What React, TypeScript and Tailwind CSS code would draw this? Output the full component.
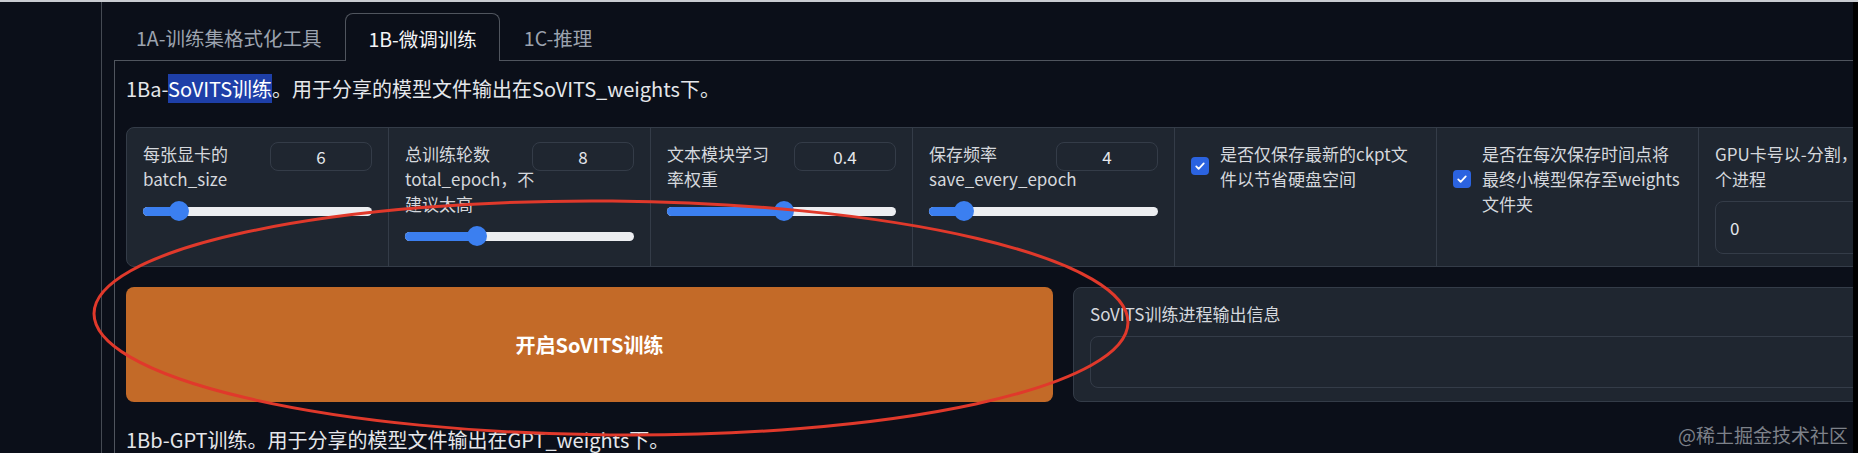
import React from "react";

type NumField = { lines: string[]; value: string; pos: number };
type CheckField = { lines: string[] };

const numFields: NumField[] = [
  { lines: ["每张显卡的", "batch_size"], value: "6", pos: 0.125 },
  { lines: ["总训练轮数", "total_epoch，不", "建议太高"], value: "8", pos: 0.298 },
  { lines: ["文本模块学习", "率权重"], value: "0.4", pos: 0.514 },
  { lines: ["保存频率", "save_every_epoch"], value: "4", pos: 0.12 },
];

const checkFields: CheckField[] = [
  { lines: ["是否仅保存最新的ckpt文", "件以节省硬盘空间"] },
  { lines: ["是否在每次保存时间点将", "最终小模型保存至weights", "文件夹"] },
];

const label = "text-[17px] leading-[25px] text-[#d5d8dd] whitespace-nowrap";

function Slider({ pos }: { pos: number }) {
  // thumb is 20px, so it travels over (track - 20px)
  return (
    <div className="relative mt-[10px] flex h-5 items-center">
      <div className="h-[9px] w-full rounded-full bg-[#eceef1]" />
      <div
        className="absolute left-0 h-[9px] rounded-full bg-[#3b7ff0]"
        style={{ width: `calc(${pos} * (100% - 20px) + 10px)` }}
      />
      <div
        className="absolute top-0 size-5 rounded-full bg-[#3b7ff0]"
        style={{ left: `calc(${pos} * (100% - 20px))` }}
      />
    </div>
  );
}

function NumberCol({ f }: { f: NumField }) {
  return (
    <div className="w-[262px] shrink-0 border-r border-[#343c48] px-4 pt-[13px]">
      <div className="flex gap-1">
        <div className="min-w-0 flex-1">
          {f.lines.map((l) => (
            <div key={l} className={label}>
              {l}
            </div>
          ))}
        </div>
        <div className="mt-px flex h-[29px] w-[102px] shrink-0 items-center justify-center rounded-lg border border-[#343c48] text-[17px] text-[#e5e7eb]">
          {f.value}
        </div>
      </div>
      <Slider pos={f.pos} />
    </div>
  );
}

function CheckCol({ f }: { f: CheckField }) {
  return (
    <div className="flex w-[262px] shrink-0 items-start border-r border-[#343c48] px-4 pt-[13px]">
      <div className="flex items-center gap-[11px]">
        <div className="flex size-[18px] shrink-0 items-center justify-center rounded-[4px] bg-[#2b63e0]">
          <svg viewBox="0 0 16 16" className="size-3" fill="none" stroke="white" strokeWidth="2.4" strokeLinecap="round" strokeLinejoin="round">
            <path d="M3 8.5l3.2 3.2L13 4.5" />
          </svg>
        </div>
        <div>
          {f.lines.map((l) => (
            <div key={l} className={label}>
              {l}
            </div>
          ))}
        </div>
      </div>
    </div>
  );
}

export default function App() {
  return (
    <div className="relative h-[453px] w-[1858px] overflow-hidden bg-[#0b0f19] font-['Noto_Sans_CJK_SC','Noto_Sans',sans-serif]">
      <div className="h-[2px] bg-[#c9ccd1]" />
      <div className="flex h-[451px]">
        <div className="flex h-full w-[1853px] shrink-0 overflow-hidden">
          <div className="w-[101px] shrink-0" />
          <div className="min-w-0 flex-1 border-l border-[#454a53] pl-[12px] pt-[11px]">
            {/* tabs */}
            <div className="relative z-10 -mb-px flex h-[48px] gap-[2px] text-[19.5px]">
              <div className="flex items-center px-[22px] pt-[2px] text-[#9ca3af]">1A-训练集格式化工具</div>
              <div className="flex items-center rounded-t-lg border border-b-0 border-[#50555e] bg-[#0b0f19] px-[22px] pt-[2px] text-[#f3f4f6]">
                1B-微调训练
              </div>
              <div className="flex items-center px-[22px] pt-[2px] text-[#9ca3af]">1C-推理</div>
            </div>

            <div className="w-[2200px] border-l border-t border-[#50555e] pl-[11px] pt-[10px]">
              <p className="text-[20px] leading-[36px] text-[#e5e7eb]">
                1Ba-<span className="bg-[#1e3fa8] text-white">SoVITS训练</span>。用于分享的模型文件输出在SoVITS_weights下。
              </p>

              {/* params row */}
              <div className="mt-5 flex w-[1900px] rounded-lg border border-[#343c48] bg-[#1f2630]">
                {numFields.map((f) => (
                  <NumberCol key={f.value} f={f} />
                ))}
                {checkFields.map((f) => (
                  <CheckCol key={f.lines[0]} f={f} />
                ))}
                <div className="w-[262px] shrink-0 px-4 pt-[13px] pb-[12px]">
                  <div className={label}>GPU卡号以-分割，每个卡号一</div>
                  <div className={label}>个进程</div>
                  <div className="mt-[10px] flex h-[53px] items-center rounded-lg border border-[#343c48] px-[14px] text-[17px] text-[#e5e7eb]">
                    0
                  </div>
                </div>
              </div>

              {/* action row */}
              <div className="mt-5 flex gap-5">
                <button className="flex h-[115px] w-[927px] shrink-0 items-center justify-center rounded-lg bg-[#c36a28] text-[20px] font-bold text-white">
                  开启SoVITS训练
                </button>
                <div className="h-[115px] w-[927px] shrink-0 rounded-lg border border-[#343c48] bg-[#1f2630] px-4 pt-[13px]">
                  <div className={label}>SoVITS训练进程输出信息</div>
                  <div className="mt-[10px] h-[52px] rounded-lg border border-[#343c48]" />
                </div>
              </div>

              <p className="mt-5 text-[20px] leading-[36px] text-[#e5e7eb]">
                1Bb-GPT训练。用于分享的模型文件输出在GPT_weights下。
              </p>
            </div>
          </div>
        </div>
        <div className="w-[5px] shrink-0 bg-black" />
      </div>

      {/* hand-drawn annotation */}
      <svg className="pointer-events-none absolute inset-0" width="1858" height="453">
        <ellipse cx="611" cy="318" rx="517" ry="117" fill="none" stroke="#e0392b" strokeWidth="3" transform="rotate(0.5 611 318)" />
      </svg>

      <div className="absolute bottom-[5px] right-[10px] text-[19px] leading-[26px] text-[#7d8189]">@稀土掘金技术社区</div>
    </div>
  );
}
